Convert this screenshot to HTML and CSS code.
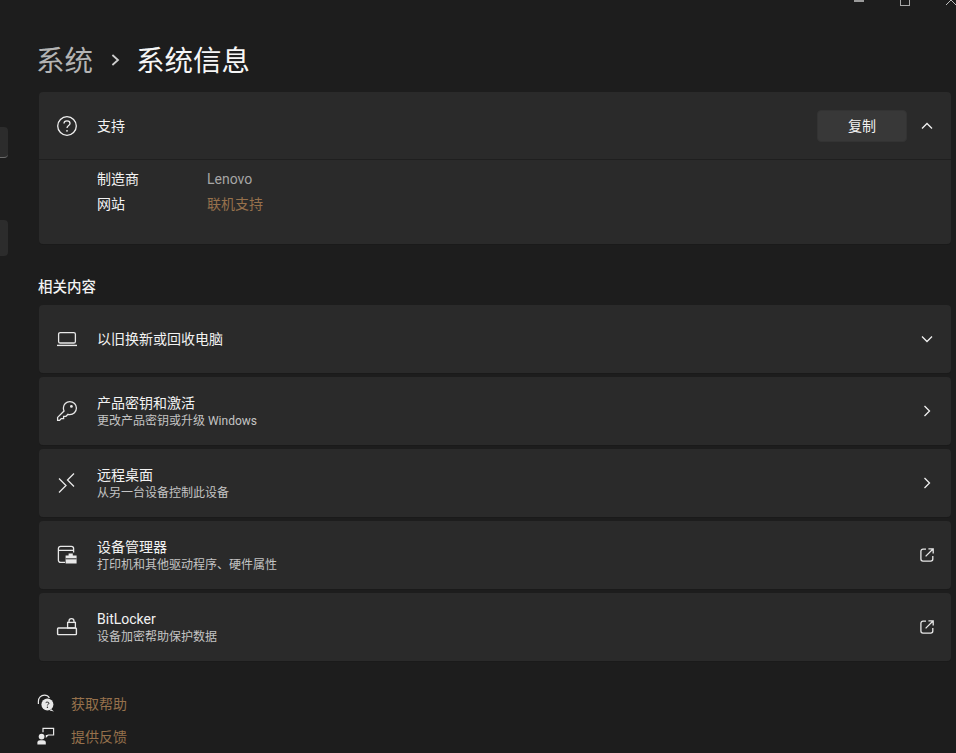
FILE: index.html
```html
<!DOCTYPE html>
<html lang="zh-CN">
<head>
  <meta charset="UTF-8">
  <title>系统信息</title>
  <link rel="stylesheet" href="styles.css">
</head>
<body>
  <div class="window">
    <!-- cut-off window buttons -->
    <div class="caption">
      <span class="cap-min"></span>
      <span class="cap-max"></span>
      <svg class="cap-close" width="10" height="8" viewBox="0 0 10 8"><path d="M0 7 L5 2 L10 7" fill="none" stroke="#bdbdbd" stroke-width="1"/></svg>
    </div>

    <div class="layout">
      <!-- what is left of the nav pane -->
      <nav class="rail">
        <div class="rail-search"></div>
        <div class="rail-item"></div>
      </nav>

      <main class="content">
        <h1 class="crumb">
          <span class="crumb-parent">系统</span>
          <svg class="crumb-sep" width="10" height="14" viewBox="0 0 10 14"><path d="M2.4 2 L8 7 L2.4 12" fill="none" stroke="#cfcfcf" stroke-width="1.8"/></svg>
          <span>系统信息</span>
        </h1>

        <section class="card support">
          <div class="row support-head">
            <svg class="icon" viewBox="0 0 22 22"><circle cx="11" cy="11" r="9.3" fill="none" stroke="#f0f0f0" stroke-width="1.3"/><path d="M8 8.6 C8 6.8 9.4 5.8 11 5.8 C12.7 5.8 14 6.9 14 8.4 C14 10.4 11 10.6 11 13" fill="none" stroke="#f0f0f0" stroke-width="1.3"/><circle cx="11" cy="15.8" r="0.9" fill="#f0f0f0"/></svg>
            <div class="row-text"><div class="row-title">支持</div></div>
            <button class="copy">复制</button>
            <svg class="chev" width="12" height="8" viewBox="0 0 12 8"><path d="M1 6.5 L6 1.5 L11 6.5" fill="none" stroke="#f0f0f0" stroke-width="1.3"/></svg>
          </div>
          <dl class="info">
            <dt>制造商</dt><dd>Lenovo</dd>
            <dt>网站</dt><dd class="link">联机支持</dd>
          </dl>
        </section>

        <h2 class="section-title">相关内容</h2>

        <div class="list">
          <div class="card row">
            <svg class="icon" viewBox="0 -3 22 22"><rect x="2.6" y="1.6" width="16.8" height="10.4" rx="1.6" fill="none" stroke="#e8e8e8" stroke-width="1.3"/><path d="M1 14.4 H21" stroke="#e8e8e8" stroke-width="1.4"/></svg>
            <div class="row-text"><div class="row-title">以旧换新或回收电脑</div></div>
            <svg class="chev" width="12" height="8" viewBox="0 0 12 8"><path d="M1 1.5 L6 6.5 L11 1.5" fill="none" stroke="#f0f0f0" stroke-width="1.3"/></svg>
          </div>

          <div class="card row">
            <svg class="icon" viewBox="0 0 22 22"><path d="M13.8 1.6 C17.6 1.6 20.4 4.4 20.4 8 C20.4 11.8 17.4 14.6 13.8 14.6 C13.2 14.6 12.6 14.5 12 14.3 L10 16.3 H7.6 V18.6 H5.2 L3.6 20.4 H1.6 V17.4 L8 11 C7.6 10 7.4 9 7.4 8 C7.4 4.4 10.2 1.6 13.8 1.6 Z" fill="none" stroke="#e8e8e8" stroke-width="1.3"/><circle cx="15.4" cy="6.4" r="1.4" fill="#e8e8e8"/></svg>
            <div class="row-text two-line">
              <div class="row-title">产品密钥和激活</div>
              <div class="row-sub">更改产品密钥或升级 Windows</div>
            </div>
            <svg class="chev-side" width="8" height="12" viewBox="0 0 8 12"><path d="M1.5 1 L6.5 6 L1.5 11" fill="none" stroke="#f0f0f0" stroke-width="1.3"/></svg>
          </div>

          <div class="card row">
            <svg class="icon" viewBox="-2 -1 22 22"><path d="M1 5.5 L8 12.5 L1 19.5" fill="none" stroke="#e8e8e8" stroke-width="1.3"/><path d="M16 0.5 L9.5 7 L16 13.5" fill="none" stroke="#e8e8e8" stroke-width="1.3"/></svg>
            <div class="row-text two-line">
              <div class="row-title">远程桌面</div>
              <div class="row-sub">从另一台设备控制此设备</div>
            </div>
            <svg class="chev-side" width="8" height="12" viewBox="0 0 8 12"><path d="M1.5 1 L6.5 6 L1.5 11" fill="none" stroke="#f0f0f0" stroke-width="1.3"/></svg>
          </div>

          <div class="card row">
            <svg class="icon" viewBox="-1 -1 22 22"><path d="M8 17.4 H3.6 C2.2 17.4 1.4 16.4 1.4 15.2 V3.6 C1.4 2.4 2.2 1.4 3.6 1.4 H14.4 C15.8 1.4 16.6 2.4 16.6 3.6 V7.5 M1.4 5.4 H16.6" fill="none" stroke="#e8e8e8" stroke-width="1.3"/><path d="M11.6 10.4 V8.6 H15.8 V10.4 H19.6 V18.4 H8.6 V10.4 Z" fill="#e8e8e8"/><path d="M8.6 13.8 H19.6" stroke="#2a2a2a" stroke-width="1"/></svg>
            <div class="row-text two-line">
              <div class="row-title">设备管理器</div>
              <div class="row-sub">打印机和其他驱动程序、硬件属性</div>
            </div>
            <svg class="ext" width="14" height="14" viewBox="0 0 14 14"><path d="M6 1.2 H3 C1.8 1.2 0.9 2.1 0.9 3.3 V11 C0.9 12.2 1.8 13.1 3 13.1 H10.7 C11.9 13.1 12.8 12.2 12.8 11 V8 M5.6 8.4 L13 1 M8.4 0.8 H13.2 V5.6" fill="none" stroke="#e8e8e8" stroke-width="1.3"/></svg>
          </div>

          <div class="card row">
            <svg class="icon" viewBox="0 -1 22 22"><rect x="1.6" y="11" width="18.8" height="6.6" rx="0.8" fill="none" stroke="#e8e8e8" stroke-width="1.4"/><rect x="11.6" y="5.4" width="7.8" height="5.6" fill="none" stroke="#e8e8e8" stroke-width="1.3"/><path d="M13 5.4 V4 C13 2.6 14 1.6 15.5 1.6 C17 1.6 18 2.6 18 4 V5.4" fill="none" stroke="#e8e8e8" stroke-width="1.3"/></svg>
            <div class="row-text two-line">
              <div class="row-title">BitLocker</div>
              <div class="row-sub">设备加密帮助保护数据</div>
            </div>
            <svg class="ext" width="14" height="14" viewBox="0 0 14 14"><path d="M6 1.2 H3 C1.8 1.2 0.9 2.1 0.9 3.3 V11 C0.9 12.2 1.8 13.1 3 13.1 H10.7 C11.9 13.1 12.8 12.2 12.8 11 V8 M5.6 8.4 L13 1 M8.4 0.8 H13.2 V5.6" fill="none" stroke="#e8e8e8" stroke-width="1.3"/></svg>
          </div>
        </div>

        <div class="help">
          <a class="help-link">
            <svg width="18" height="18" viewBox="0 0 18 18"><path d="M1.4 10 V7.4 C1.4 3.8 4 1.2 7.4 1.2 C9.6 1.2 11.4 2.2 12.4 4" fill="none" stroke="#e8e8e8" stroke-width="1.2"/><circle cx="10.4" cy="10.4" r="6" fill="#e8e8e8"/><path d="M14 15 L17 17.4 L12.6 16.4 Z" fill="#e8e8e8"/><path d="M8.8 9 C8.8 7.8 12 7.8 12 9.2 C12 10.2 10.4 10.2 10.4 11.4" fill="none" stroke="#1d1d1d" stroke-width="1"/><circle cx="10.4" cy="13.2" r="0.7" fill="#1d1d1d"/></svg>
            <span>获取帮助</span>
          </a>
          <a class="help-link">
            <svg width="18" height="18" viewBox="0 0 18 18"><path d="M6 5.2 V1.4 H16.6 V8 H11 L9.4 9.6 V8" fill="none" stroke="#e8e8e8" stroke-width="1.2"/><circle cx="4.6" cy="9.6" r="2.9" fill="#e8e8e8"/><path d="M0.4 17.6 V15.6 C0.4 14 1.6 13.2 3 13.2 H6.2 C7.6 13.2 8.8 14 8.8 15.6 V17.6 Z" fill="#e8e8e8"/></svg>
            <span>提供反馈</span>
          </a>
        </div>
      </main>
    </div>
  </div>
</body>
</html>
```

FILE: styles.css
```css
:root {
  --background: #1d1d1d;
  --card: #2a2a2a;
  --card-edge: #1a1a1a;
  --text-primary: #f2f2f2;
  --text-secondary: #c4c4c4;
  --accent: #96714c;
}

* {
  box-sizing: border-box;
  margin: 0;
  padding: 0;
}

body {
  background: var(--background);
  color: var(--text-primary);
  font-family: Roboto, "Noto Sans CJK SC", sans-serif;
  overflow: hidden;
}

.window {
  width: 956px;
  height: 753px;
  overflow: hidden;
}

/* Caption buttons, only the bottom edge is visible */
.caption {
  height: 0;
  display: flex;
  justify-content: flex-end;
}

.cap-min {
  width: 10px;
  height: 2px;
  margin-right: 36px;
  background: #9a9a9a;
  flex: none;
}

.cap-max {
  width: 10px;
  height: 6px;
  margin-right: 36px;
  border: 1px solid #a8a8a8;
  border-top: none;
  flex: none;
}

.cap-close {
  flex: none;
  margin-top: -2px;
}

.layout {
  display: flex;
}

.rail {
  width: 39px;
  flex: none;
  padding-top: 127px;
}

.rail-search {
  width: 8px;
  height: 31px;
  background: #2c2c2c;
  border-radius: 0 4px 4px 0;
  border-bottom: 1px solid #6b6b6b;
}

.rail-item {
  width: 8px;
  height: 36px;
  margin-top: 62px;
  background: #2c2c2c;
  border-radius: 0 4px 4px 0;
}

.content {
  width: 912px;
  flex: none;
}

.crumb {
  height: 92px;
  padding-top: 42px;
  margin-left: -3px;
  display: flex;
  align-items: flex-start;
  font-size: 28.5px;
  line-height: 40px;
  font-weight: 400;
  color: #f6f6f6;
}

.crumb-parent {
  color: #b4b4b4;
}

.crumb-sep {
  margin: 11px 16px 0 17px;
}

.card {
  background: var(--card);
  border-radius: 4px;
  box-shadow: 0 1px 0 var(--card-edge);
}

.row {
  height: 68px;
  display: flex;
  align-items: center;
  padding: 0 18px 0 17px;
}

.icon {
  width: 22px;
  height: 22px;
  flex: none;
  margin-right: 19px;
}

.row-text {
  flex: 1;
}

.two-line {
  padding-top: 2px;
}

.row-title {
  font-size: 14px;
  line-height: 19px;
  color: var(--text-primary);
}

.row-sub {
  font-size: 12px;
  line-height: 17px;
  color: var(--text-secondary);
}

.copy {
  width: 90px;
  height: 32px;
  background: #383838;
  border: 1px solid #333333;
  border-radius: 4px;
  color: var(--text-primary);
  font: inherit;
  font-size: 14px;
  line-height: 26px;
  margin-right: 14px;
}

.chev,
.chev-side,
.ext {
  flex: none;
}

.chev-side {
  margin-right: 2px;
}

.ext {
  margin-right: -1px;
}

.support {
  height: 152px;
}

.support-head {
  height: 68px;
  padding-top: 1px;
  border-bottom: 1px solid #1f1f1f;
}

.info {
  display: grid;
  grid-template-columns: 110px 1fr;
  padding: 7px 0 0 58px;
  font-size: 14px;
  line-height: 25px;
}

.info dd {
  color: #a6a6a6;
}

.info dd.link {
  color: var(--accent);
}

.section-title {
  font-size: 14.5px;
  font-weight: 500;
  line-height: 20px;
  margin: 34px 0 7px -1px;
  color: var(--text-primary);
}

.list {
  display: flex;
  flex-direction: column;
  gap: 4px;
}

.help {
  margin-top: 32px;
  margin-left: -2px;
  display: flex;
  flex-direction: column;
  gap: 13px;
}

.help-link {
  display: flex;
  align-items: center;
  gap: 16px;
  height: 20px;
  font-size: 14px;
  color: var(--accent);
}
```
